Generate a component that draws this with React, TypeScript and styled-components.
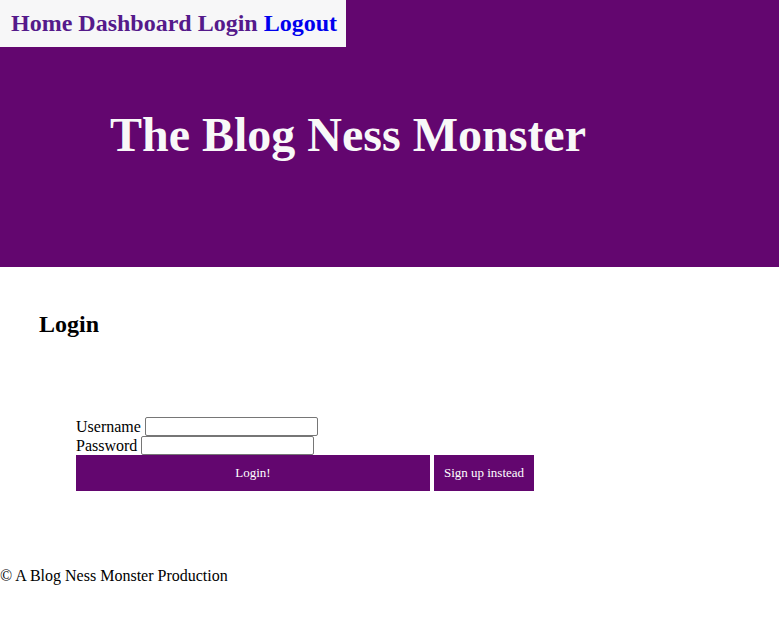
import styled, { createGlobalStyle } from "styled-components";

const GlobalStyle = createGlobalStyle`
  body {
    margin: 0;
    font-family: "Liberation Serif", "Times New Roman", serif;
    background: #fff;
  }
`;

const Header = styled.header`
  height: 267px;
  background: #63066f;
  display: flex;
  flex-direction: column;
  align-items: flex-start;
`;

const Nav = styled.nav`
  background: #f7f7f8;
  padding: 10px 9px 10px 11px;
  font-size: 24px;
  font-weight: bold;
  display: flex;
  gap: 6px;
`;

const NavLink = styled.a<{ $visited?: boolean }>`
  color: ${(p) => (p.$visited ? "#551a8b" : "#0000ee")};
  text-decoration: none;
`;

const Title = styled.h1`
  margin: 60px 0 0 110px;
  font-size: 48px;
  color: #f8f8f8;
`;

const Main = styled.main`
  padding: 44px 0 0 39px;
`;

const Heading = styled.h2`
  margin: 0;
  font-size: 24px;
`;

const Form = styled.form`
  margin: 79px 0 0 37px;
  font-size: 16px;
  display: flex;
  flex-direction: column;
`;

const Row = styled.label`
  display: flex;
  align-items: center;
  height: 19px;
  white-space: pre;
`;

const Input = styled.input`
  width: 173px;
  height: 19px;
  box-sizing: border-box;
  border: 1px solid #767676;
  border-radius: 2px;
  padding: 0 2px;
`;

const Buttons = styled.div`
  display: flex;
  gap: 4px;
`;

const Button = styled.button<{ $width: number }>`
  width: ${(p) => p.$width}px;
  height: 36px;
  background: #63066f;
  color: #fff;
  border: none;
  font-family: "Liberation Serif", serif;
  font-size: 13px;
`;

const Footer = styled.footer`
  margin-top: 76px;
  font-size: 16px;
`;

export default function App() {
  return (
    <>
      <GlobalStyle />
      <Header>
        <Nav>
          <NavLink $visited href="#">Home</NavLink>
          <NavLink $visited href="#">Dashboard</NavLink>
          <NavLink $visited href="#">Login</NavLink>
          <NavLink href="#">Logout</NavLink>
        </Nav>
        <Title>The Blog Ness Monster</Title>
      </Header>
      <Main>
        <Heading>Login</Heading>
        <Form onSubmit={(e) => e.preventDefault()}>
          <Row>{"Username "}<Input type="text" /></Row>
          <Row>{"Password "}<Input type="password" /></Row>
          <Buttons>
            <Button $width={354} type="submit">Login!</Button>
            <Button $width={100} type="button">Sign up instead</Button>
          </Buttons>
        </Form>
      </Main>
      <Footer>© A Blog Ness Monster Production</Footer>
    </>
  );
}
